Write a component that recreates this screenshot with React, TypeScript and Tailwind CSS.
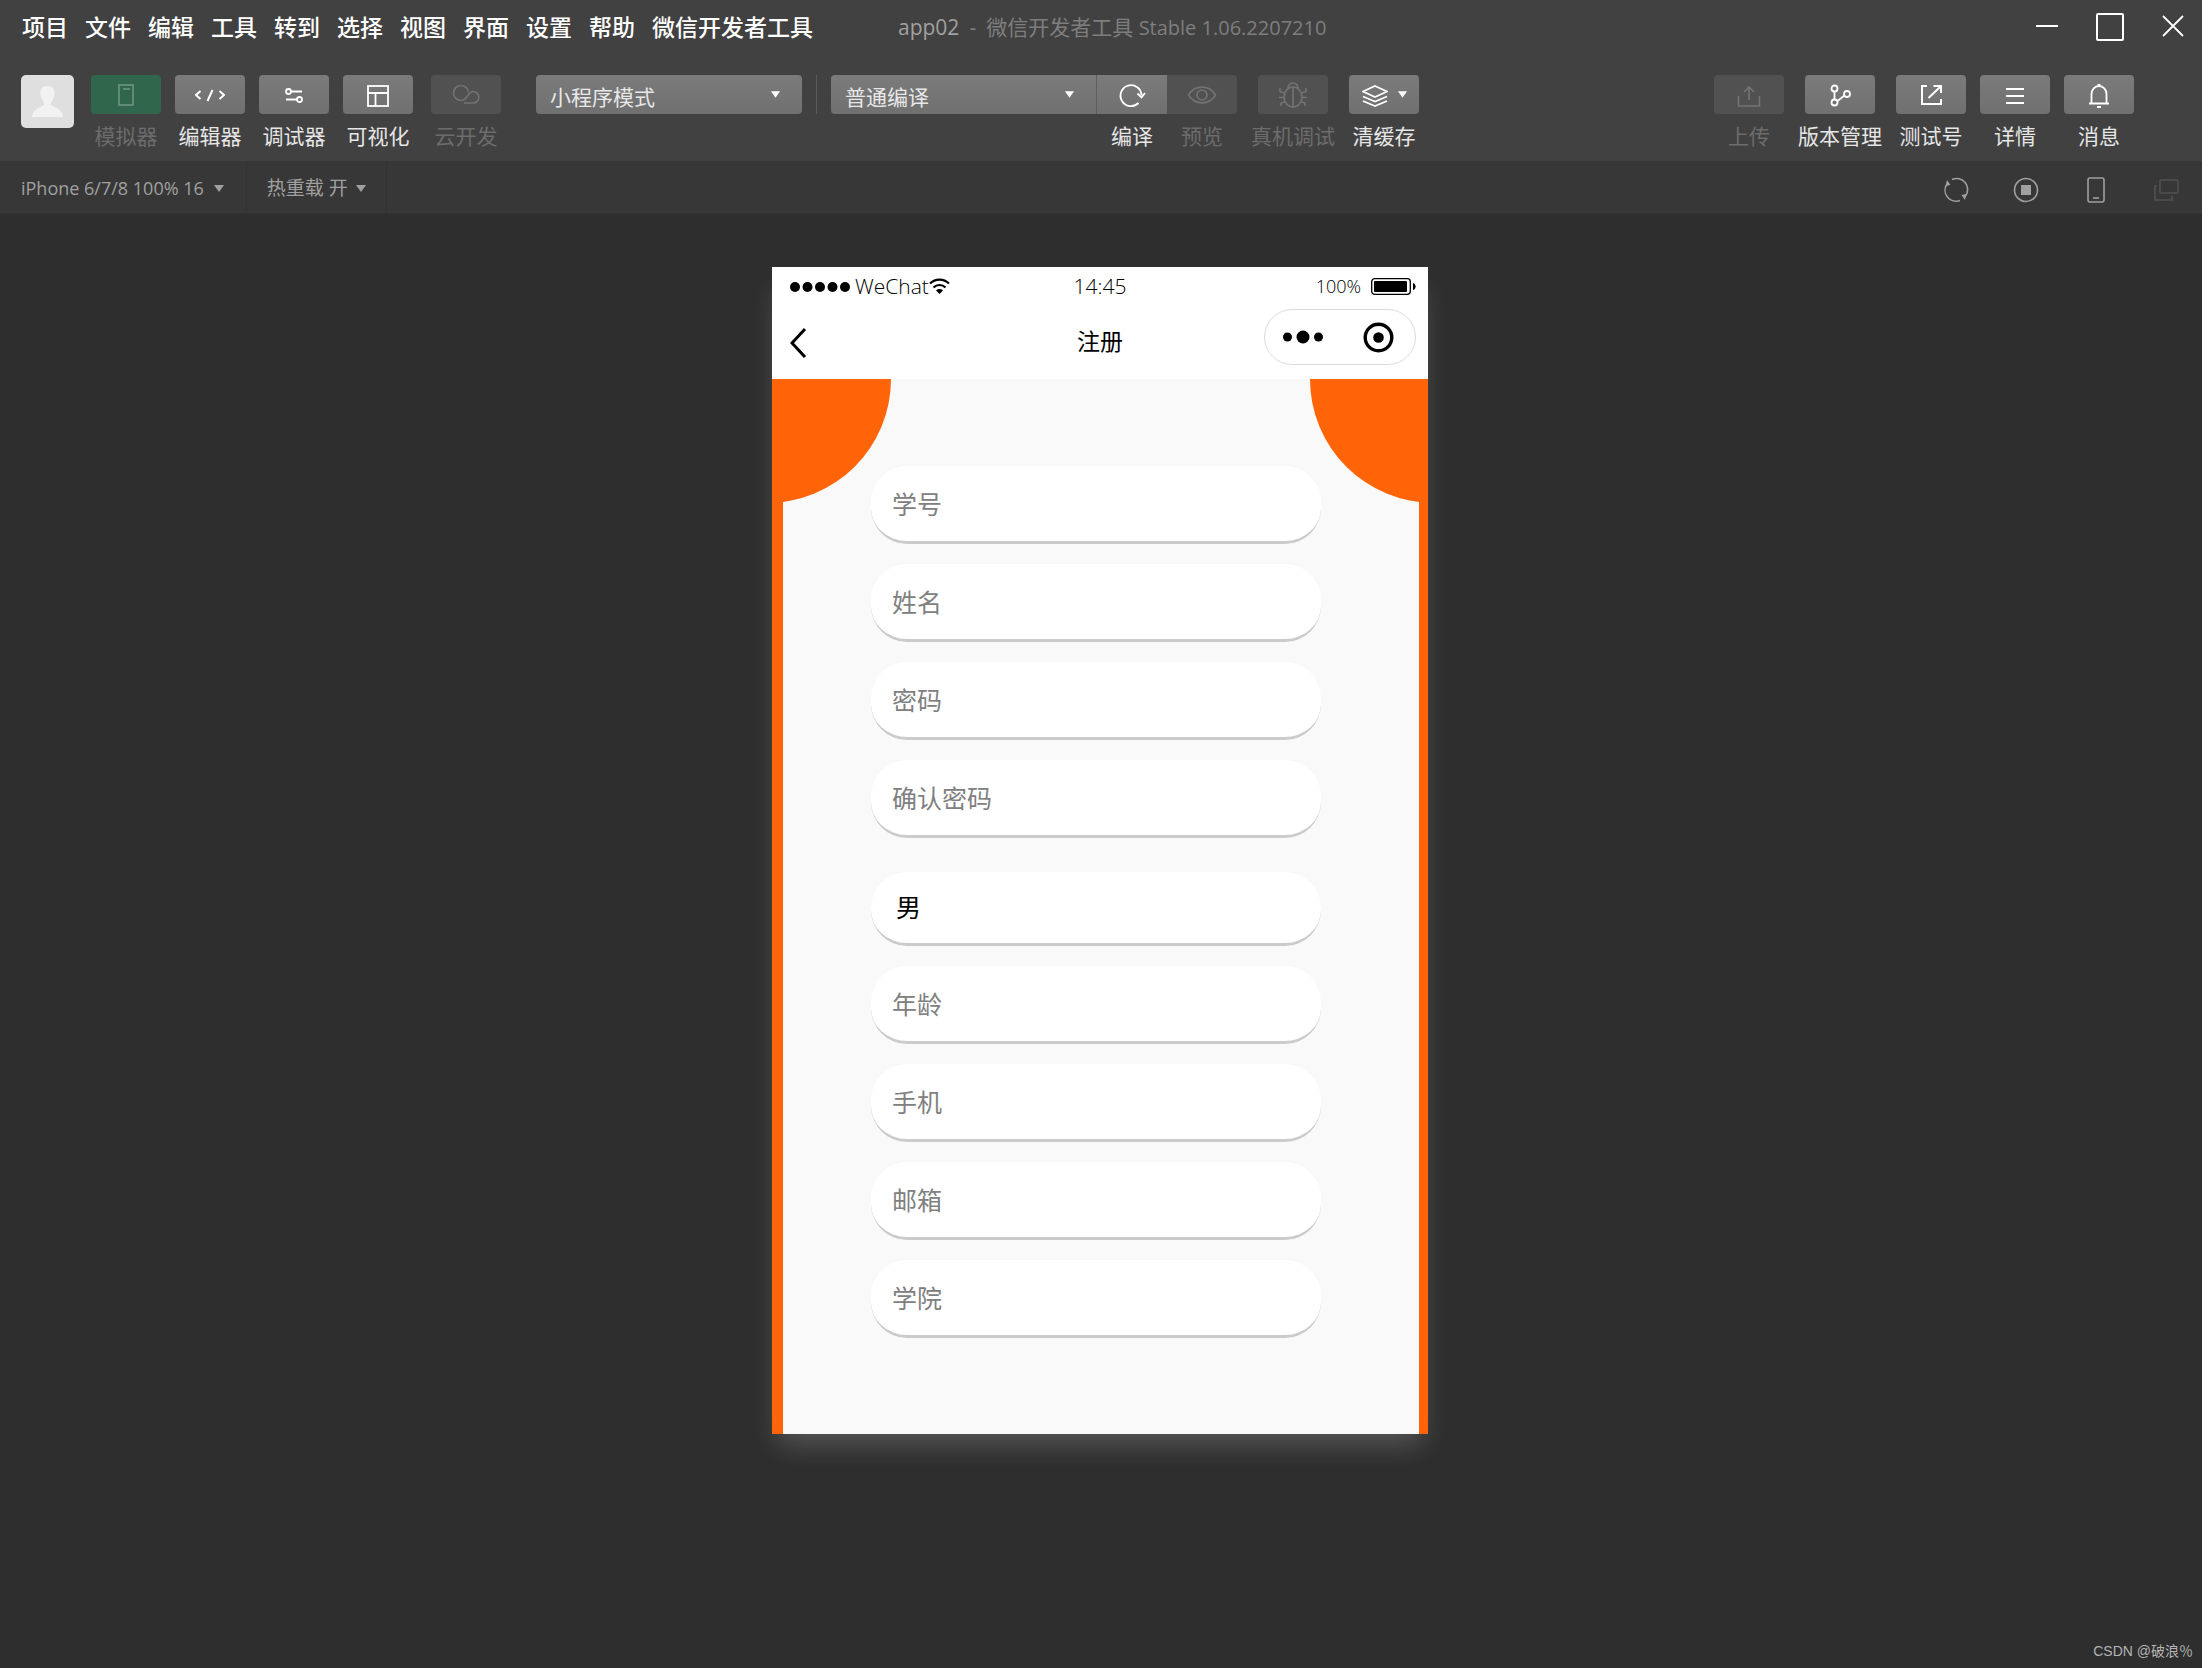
import type { ReactNode } from "react";

const menus = ["项目", "文件", "编辑", "工具", "转到", "选择", "视图", "界面", "设置", "帮助", "微信开发者工具"];

const fieldsBefore = ["学号", "姓名", "密码", "确认密码"];
const fieldsAfter = ["年龄", "手机", "邮箱", "学院"];

interface IconProps {
    children: ReactNode;
    w?: number;
    h?: number;
    stroke?: number;
}

function Icon({ children, w = 30, h = 26, stroke = 1.6 }: IconProps) {
    return (
        <svg
            width={w}
            height={h}
            viewBox={`0 0 ${w} ${h}`}
            fill="none"
            stroke="currentColor"
            strokeWidth={stroke}
            className="shrink-0"
            aria-hidden="true"
        >
            {children}
        </svg>
    );
}

function Caret({ className = "" }: { className?: string }) {
    return (
        <svg width="10" height="7" viewBox="0 0 10 7" className={`shrink-0 ${className}`} aria-hidden="true">
            <path d="M0 0h10L5 7z" fill="currentColor" />
        </svg>
    );
}

interface ToolProps {
    label: string;
    children: ReactNode;
    disabled?: boolean;
    active?: boolean;
    shape?: string;
}

function Tool({ label, children, disabled, active, shape = "rounded-[4px]" }: ToolProps) {
    const face = active
        ? "bg-[#2f664c] text-[#6d9482]"
        : disabled
          ? "bg-[#515151] text-[#737373]"
          : "bg-linear-to-b from-[#7b7b7b] to-[#707070] text-white";
    return (
        <button type="button" className="flex w-[70px] flex-col items-center">
            <span className={`flex h-[39px] w-full items-center justify-center ${shape} ${face}`}>{children}</span>
            <span
                className={`mt-[7px] text-[21px] leading-[30px] whitespace-nowrap ${
                    disabled || active ? "text-[#6c6c6c]" : "text-[#e6e6e6]"
                }`}
            >
                {label}
            </span>
        </button>
    );
}

function Picker({ label, value, shape }: { label: string; value: string; shape: string }) {
    return (
        <div
            className={`relative flex h-[39px] w-[266px] items-center bg-linear-to-b from-[#7b7b7b] to-[#707070] text-white ${shape}`}
        >
            <select
                aria-label={label}
                className="h-full w-full appearance-none pt-[6px] pl-[14px] text-[21px] text-[#e8e8e8] outline-none"
            >
                <option>{value}</option>
            </select>
            <Caret className="pointer-events-none absolute right-[22px] w-[9px]" />
        </div>
    );
}

function TitleBar() {
    return (
        <div className="flex h-[54px] items-center justify-between pr-[18px] pl-[22px]">
            <div className="flex items-center">
                <nav className="flex gap-[17px]">
                    {menus.map((m) => (
                        <button key={m} type="button" className="text-[23px] leading-8 font-medium text-white">
                            {m}
                        </button>
                    ))}
                </nav>
                <p className="ml-[85px] flex gap-[10px] text-[21px] leading-8 text-[#7e7e7e]">
                    <span className="text-[#a0a0a0]">app02</span>
                    <span>-</span>
                    <span>
                        微信开发者工具 <span className="text-[20px]">Stable 1.06.2207210</span>
                    </span>
                </p>
            </div>
            <div className="flex items-center gap-[38px] text-white">
                <button type="button" aria-label="最小化">
                    <Icon w={22} h={28} stroke={2}>
                        <path d="M0 13h22" />
                    </Icon>
                </button>
                <button type="button" aria-label="最大化">
                    <Icon w={28} h={28} stroke={2}>
                        <rect x="1" y="1" width="26" height="26" rx="1" />
                    </Icon>
                </button>
                <button type="button" aria-label="关闭">
                    <Icon w={22} h={28} stroke={1.8}>
                        <path d="M1 3l20 20M21 3L1 23" />
                    </Icon>
                </button>
            </div>
        </div>
    );
}

function Toolbar() {
    return (
        <div className="flex h-[107px] items-start justify-between pt-[21px] pr-[68px] pl-[21px]">
            <div className="flex items-start">
                <div className="flex size-[53px] items-center justify-center rounded-[5px] bg-[#dfdfdf] text-[#f2f2f2]">
                    <svg width="31" height="33" viewBox="0 0 31 33" fill="currentColor" aria-hidden="true">
                        <path d="M15.5 1c5 0 7.5 3.5 7 8-.4 4-1.5 6-3.5 8v3c2 2 12 4 12 12H0c0-8 10-10 12-12v-3c-2-2-3.1-4-3.5-8-.5-4.500 2-8 7-8z" />
                    </svg>
                </div>
                <div className="ml-[17px] flex gap-[14px]">
                    <Tool label="模拟器" active>
                        <Icon>
                            <rect x="8" y="3" width="14" height="20" />
                            <path d="M12 7h7" />
                        </Icon>
                    </Tool>
                    <Tool label="编辑器">
                        <Icon stroke={2}>
                            <path d="M5.5 9L1 13l4.5 4M24.5 9l4.5 4-4.5 4M17.5 8l-5 11" />
                        </Icon>
                    </Tool>
                    <Tool label="调试器">
                        <Icon stroke={1.8}>
                            <circle cx="9.5" cy="9.5" r="2.5" />
                            <path d="M12 9.5h11M7 17.5h11" />
                            <circle cx="20.5" cy="17.5" r="2.5" />
                        </Icon>
                    </Tool>
                    <Tool label="可视化">
                        <Icon stroke={1.8}>
                            <rect x="5" y="4" width="20" height="20" />
                            <path d="M5 11h20M12.5 11v13" />
                        </Icon>
                    </Tool>
                </div>
                <div className="ml-[18px]">
                    <Tool label="云开发" disabled>
                        <Icon>
                            <path d="M16 14.5C19 11 20 9.5 22 9.5a4.8 4.8 0 0 1 0 11.500H13M16 14.5C14.500 17 12.5 18.5 10 18.5a7.500 7.500 0 1 1 7.500-8" />
                        </Icon>
                    </Tool>
                </div>
                <div className="ml-[35px] flex">
                    <Picker label="模式" value="小程序模式" shape="rounded-[4px]" />
                    <span className="mx-[14px] h-[39px] w-px bg-[#5a5a5a]" />
                    <Picker label="编译模式" value="普通编译" shape="rounded-l-[4px] border-r border-[#5e5e5e]" />
                    <Tool label="编译" shape="rounded-none">
                        <Icon stroke={1.8}>
                            <path d="M21.5 21A10.5 10.5 0 1 1 24.5 13.5" />
                            <path d="M20.5 11.5l4 4 3.5-4.5" />
                        </Icon>
                    </Tool>
                    <Tool label="预览" disabled shape="rounded-r-[4px]">
                        <Icon>
                            <path d="M1.5 13C8 2.5 22 2.5 28.5 13C22 23.5 8 23.5 1.5 13z" />
                            <circle cx="15" cy="13" r="5" />
                        </Icon>
                    </Tool>
                </div>
                <div className="ml-[21px] flex gap-[21px]">
                    <Tool label="真机调试" disabled>
                        <Icon>
                            <ellipse cx="15" cy="15" rx="9" ry="10" />
                            <path d="M10 6a5 5 0 0 1 10 0M15 5v20M6.5 11L2 9.5V6M23.5 11L28 9.5V6M6 15.5H1M24 15.5h5M7.5 19.5L3 21v3M22.5 19.5L27 21v3" />
                        </Icon>
                    </Tool>
                    <Tool label="清缓存">
                        <span className="flex items-center gap-[10px]">
                            <Icon w={26} h={24} stroke={1.8}>
                                <path d="M13 3l12 5.5-12 5.5L1 8.5zM1 13.5l12 5 12-5M1 18l12 5 12-5" />
                            </Icon>
                            <Caret className="w-[9px]" />
                        </span>
                    </Tool>
                </div>
            </div>
            <div className="flex gap-[21px]">
                <Tool label="上传" disabled>
                    <Icon>
                        <path d="M4.5 14v10h21V14M15 18V5M10 10l5-5 5 5" />
                    </Icon>
                </Tool>
                <Tool label="版本管理">
                    <Icon stroke={1.8}>
                        <circle cx="9.5" cy="6.5" r="3" />
                        <circle cx="9.5" cy="20.5" r="3" />
                        <circle cx="22" cy="12" r="3" />
                        <path d="M9.5 9.5v8M12.5 19L19.5 13.5" />
                    </Icon>
                </Tool>
                <div className="flex gap-[14px]">
                    <Tool label="测试号">
                        <Icon stroke={2}>
                            <path d="M11 4H6v18h19v-5M12.5 16L24 5M17.5 4H25v7" />
                        </Icon>
                    </Tool>
                    <Tool label="详情">
                        <Icon stroke={2}>
                            <path d="M6 7h18M6 14h18M6 21h18" />
                        </Icon>
                    </Tool>
                    <Tool label="消息">
                        <Icon stroke={1.8}>
                            <path d="M7.5 21v-9a7.5 8 0 0 1 15 0v9M5 21.5h20M13 25h4M13.5 3h3" />
                        </Icon>
                    </Tool>
                </div>
            </div>
        </div>
    );
}

function SimulatorBar() {
    return (
        <div className="flex h-[53px] items-stretch justify-between border-b border-[#323232] bg-[#373737] text-[#a0a0a0]">
            <div className="flex">
                <button
                    type="button"
                    className="flex items-center gap-[10px] border-r border-[#323232] pt-[3px] pr-[22px] pl-[21px] text-[18px]"
                >
                    iPhone 6/7/8 100% 16
                    <Caret />
                </button>
                <button
                    type="button"
                    className="flex items-center gap-2 border-r border-[#323232] px-[20px] pt-[3px] text-[19px]"
                >
                    热重载 开
                    <Caret />
                </button>
            </div>
            <div className="flex items-center gap-[44px] pt-[5px] pr-[23px]">
                <button type="button" aria-label="刷新">
                    <Icon w={26} h={26}>
                        <path d="M9 2.5A11 11 0 0 1 22.5 19M17 23.5A11 11 0 0 1 4 7" />
                        <path d="M4 3l-1.5 6 5-1zM22 23l1.5-6-5 1z" fill="currentColor" stroke="none" />
                    </Icon>
                </button>
                <button type="button" aria-label="停止">
                    <Icon w={26} h={26}>
                        <circle cx="13" cy="13" r="11.5" />
                        <rect x="8" y="8" width="10" height="10" fill="currentColor" stroke="none" />
                    </Icon>
                </button>
                <button type="button" aria-label="设备">
                    <Icon w={26} h={26}>
                        <rect x="5" y="1" width="16" height="24" rx="2" />
                        <path d="M10 21h6" />
                    </Icon>
                </button>
                <button type="button" aria-label="分离窗口" className="text-[#515151]">
                    <Icon w={26} h={26}>
                        <rect x="7" y="3" width="18" height="13" rx="1" />
                        <path d="M4 9H2v14h17v-4" />
                    </Icon>
                </button>
            </div>
        </div>
    );
}

function PhoneHeader() {
    return (
        <header className="bg-white px-[12px] text-black">
            <div className="grid h-[38px] grid-cols-3 items-center text-[21px] leading-7 font-light">
                <div className="flex items-center pl-[6px]">
                    <svg width="60" height="12" viewBox="0 0 60 12" aria-hidden="true">
                        <circle cx="5" cy="7" r="5" />
                        <circle cx="17.5" cy="7" r="5" />
                        <circle cx="30" cy="7" r="5" />
                        <circle cx="42.5" cy="7" r="5" />
                        <circle cx="55" cy="7" r="5" />
                    </svg>
                    <span className="ml-[5px]">WeChat</span>
                    <svg width="21" height="16" viewBox="0 0 21 16" fill="none" stroke="#000" strokeWidth="2.2" aria-hidden="true">
                        <path d="M1 5.5a13.5 13.5 0 0 1 19 0M4.5 9.5a8.5 8.5 0 0 1 12 0" />
                        <path d="M7 12.5a5 5 0 0 1 7 0L10.5 16z" fill="#000" stroke="none" />
                    </svg>
                </div>
                <span className="text-center">14:45</span>
                <div className="flex items-center justify-end gap-[10px] text-[18px]">
                    100%
                    <svg width="45" height="17" viewBox="0 0 45 17" aria-hidden="true">
                        <rect x="0.7" y="0.7" width="38.6" height="15.6" rx="3" fill="none" stroke="#000" strokeWidth="1.3" />
                        <rect x="3" y="3" width="33" height="11" rx="1" />
                        <path d="M42 5c3.5 1 3.5 6 0 7z" />
                    </svg>
                </div>
            </div>
            <div className="grid h-[74px] grid-cols-3 items-start pt-1">
                <button type="button" aria-label="返回" className="mt-[18px] ml-[6px] justify-self-start">
                    <svg width="17" height="32" viewBox="0 0 17 32" fill="none" stroke="#000" strokeWidth="3" aria-hidden="true">
                        <path d="M15 2L2 16l13 14" />
                    </svg>
                </button>
                <h1 className="mt-4 text-center text-[23px] leading-8 font-normal">注册</h1>
                <div className="flex h-[56px] w-[152px] items-center justify-between justify-self-end rounded-full border border-[#dcdcdc] pr-[21px] pl-[18px]">
                    <button type="button" aria-label="更多">
                        <svg width="40" height="14" viewBox="0 0 40 14" aria-hidden="true">
                            <circle cx="4.5" cy="7" r="4.5" />
                            <circle cx="20" cy="7" r="6.5" />
                            <circle cx="35.5" cy="7" r="4.5" />
                        </svg>
                    </button>
                    <button type="button" aria-label="关闭小程序">
                        <svg width="31" height="31" viewBox="0 0 31 31" aria-hidden="true">
                            <circle cx="15.5" cy="15.5" r="13.3" fill="none" stroke="#000" strokeWidth="3.4" />
                            <circle cx="15.5" cy="15.5" r="5.3" />
                        </svg>
                    </button>
                </div>
            </div>
        </header>
    );
}

function Field({ label }: { label: string }) {
    return (
        <input
            aria-label={label}
            placeholder={label}
            className="h-[78px] w-full rounded-[36px] border-b-[3px] border-[#cbcbcb] bg-white px-[21px] text-[25px] text-black outline-none placeholder:text-[#808080]"
        />
    );
}

function Phone() {
    return (
        <div className="w-[656px] shadow-[0_16px_26px_-6px_rgba(255,255,255,0.2)]">
            <PhoneHeader />
            <form className="relative overflow-hidden border-r-[9px] border-l-[11px] border-[#ff6508] bg-[#f9f9f9] pt-[87px] pr-[98px] pb-[96px] pl-[88px]">
                <span className="absolute -top-[124px] -left-[140px] size-[248px] rounded-full bg-[#ff6508]" />
                <span className="absolute -top-[124px] -right-[139px] size-[248px] rounded-full bg-[#ff6508]" />
                <div className="relative flex flex-col gap-5">
                    {fieldsBefore.map((f) => (
                        <Field key={f} label={f} />
                    ))}
                    <select
                        aria-label="性别"
                        className="mt-[14px] h-[74px] w-full appearance-none rounded-[36px] border-b-[3px] border-[#cbcbcb] bg-white px-[25px] text-[25px] text-black outline-none"
                    >
                        <option>男</option>
                        <option>女</option>
                    </select>
                    {fieldsAfter.map((f) => (
                        <Field key={f} label={f} />
                    ))}
                </div>
            </form>
        </div>
    );
}

export default function App() {
    return (
        <div className="flex min-h-screen flex-col border-r-[6px] border-white bg-[#2e2e2e] font-['Open_Sans','Noto_Sans_CJK_SC',sans-serif]">
            <header className="bg-[#414141]">
                <TitleBar />
                <Toolbar />
                <SimulatorBar />
            </header>
            <main className="flex grow flex-col items-center pt-[53px] pr-[2px]">
                <Phone />
            </main>
            <footer className="px-[9px] pb-[5px] text-right font-['Liberation_Sans','Noto_Sans_CJK_SC',sans-serif] text-[14px] leading-6 text-[#b4b4b4]">
                CSDN @破浪％
            </footer>
        </div>
    );
}
